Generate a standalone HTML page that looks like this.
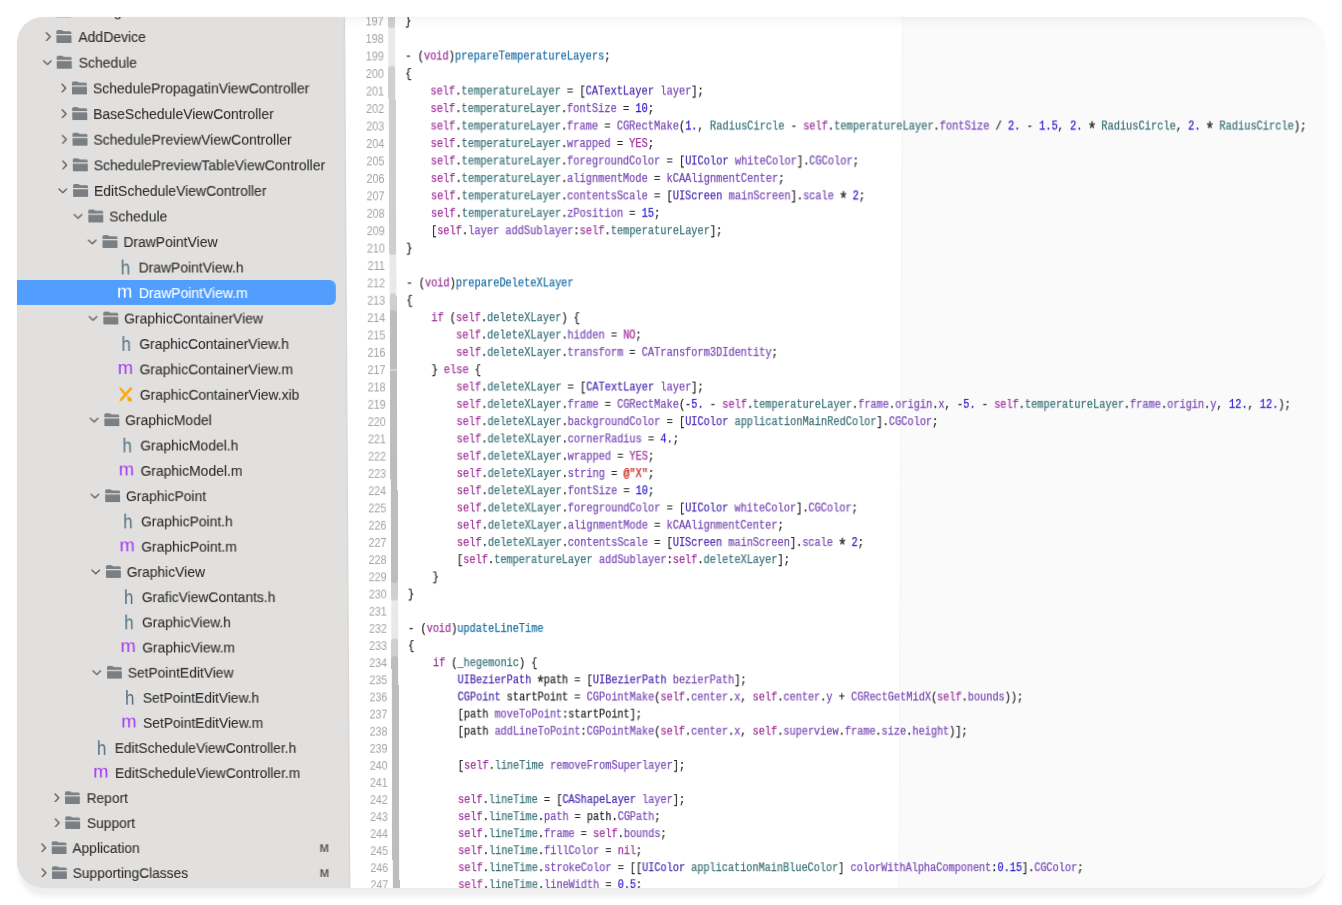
<!DOCTYPE html>
<html><head><meta charset="utf-8"><title>Xcode</title>
<style>
*{box-sizing:border-box}
html,body{margin:0;padding:0;background:#fff}
body{width:1342px;height:905px;overflow:hidden;position:relative;font-family:"Liberation Sans",sans-serif}
.card{position:absolute;left:17.2px;top:16.9px;width:1308.2px;height:870.8px;border-radius:26px;overflow:hidden;background:#fff;z-index:2}
.shadow{position:absolute;left:17.2px;top:16.9px;width:1308.4px;height:870.8px;border-radius:26px;box-shadow:0 9.5px 5.5px -2px rgba(0,0,0,.066),0 0 2px rgba(0,0,0,.03);z-index:1}
.warp{position:absolute;left:-17.2px;top:-16.9px;width:1400px;height:960px;transform-origin:0 0;transform:matrix3d(1,0,0,0, 0.01224000,1,0,0.00001800, 0,0,1,0, 0,0,0,1)}
.sb{position:absolute;left:0;top:0;width:345.35px;height:960px;background:#e1e0df}
.sbedge{position:absolute;left:343.15000000000003px;top:0;width:2.2px;height:960px;background:linear-gradient(90deg,rgba(0,0,0,0),rgba(0,0,0,.05))}
.ed{position:absolute;left:345.35px;top:0;width:1060px;height:960px;background:#fff}
.pg{position:absolute;left:556.75px;top:0;width:700px;height:960px;background:#fafafa;border-left:1px solid #f4f4f4}
.topsh{position:absolute;left:345.35px;top:0;width:1060px;height:29px;background:linear-gradient(180deg,rgba(0,0,0,.07) 0,rgba(0,0,0,.045) 17px,rgba(0,0,0,.012) 23px,rgba(0,0,0,0) 28px)}
.row{position:absolute;left:0;width:345.35px;height:25.758px;will-change:transform}
.row span{position:absolute;top:0;height:26px;line-height:26px;white-space:nowrap}
.selbg{position:absolute;left:0;width:333.8px;height:25.657999999999998px;background:#519efe;border-radius:0 6px 6px 0}
.nm{font-size:15.5px;color:#2e2d2c;transform-origin:0 50%;transform:scaleX(0.902);-webkit-text-stroke:0.1px}
.sel .nm{color:#fff}
.bd{left:314.1px;font-size:11.4px;font-weight:bold;color:#5b5a59}
.chw{width:12px}
.ch{position:absolute;left:0;top:6.88px;width:12px;height:12px}
svg.ch[viewBox="0 0 10 12"]{width:7.8px;height:9.4px;left:3.2px;top:7.78px}
svg.ch[viewBox="0 0 12 10"]{width:9.4px;height:7.8px;left:1.4px;top:9.48px}
.fow{width:16px}
.fo{position:absolute;left:0;top:5.78px;width:15.1px;height:13.4px;fill:#7a7f83}
.ih{font-size:20px;color:#4f7185;transform-origin:0 50%;transform:scaleX(.85)}
.im{font-size:18.5px;color:#a335f3;will-change:transform;transform:translateY(-1.4px)}
.sel .im{color:#fff}
.ix{width:14px}
.xi{position:absolute;left:0;top:5.13px;width:13.5px;height:15.4px}
.lw{position:absolute;left:0;width:1342px;height:18px;will-change:transform}
.ln{position:absolute;top:0;left:345.35px;width:38.55px;height:18px;line-height:18px;text-align:right;font-size:13.0px;color:#a3a3a3;white-space:nowrap}
.ln{transform-origin:100% 50%;transform:scaleX(.83)}
.gbar{position:absolute;left:388.0px;top:0;width:6.7px;height:960px;background:#e9e9e9}
.seg{position:absolute;left:388.0px;width:6.7px}
.cl{position:absolute;top:0;left:405.0px;height:18px;line-height:18px;font-family:"Liberation Mono",monospace;font-size:12.3px;color:#262626;white-space:pre;-webkit-text-stroke:0.25px;transform-origin:0 50%;transform:scaleX(0.84336)}
.cl i{font-style:normal}
.cl .a{display:inline-block;transform:translateY(3.6px) scale(1.45)}
.k{color:#a0329b}.d{color:#1a6fa6}.p{color:#3b7379}.s{color:#7a4bb6}.c{color:#4b2bb0}.n{color:#2a1bd0}.t{color:#c8251d}
</style></head>
<body>
<div class="shadow"></div>
<div class="card"><div class="warp">
<div class="sb"></div>
<div class="ed"><div class="pg"></div></div>
<div class="gbar"></div>
<div class="seg" style="top:-110.49px;height:138.09px;background:#cfcfcf;border-radius:0px 0px 3.35px 3.35px"></div>
<div class="seg" style="top:66.32px;height:189.57px;background:#cfcfcf;border-radius:3.35px 3.35px 3.35px 3.35px"></div>
<div class="seg" style="top:294.61px;height:21.36px;background:#cfcfcf;border-radius:3.35px 3.35px 0px 0px"></div>
<div class="seg" style="top:584.95px;height:22.16px;background:#cfcfcf;border-radius:0px 0px 3.35px 3.35px"></div>
<div class="seg" style="top:645.83px;height:21.36px;background:#cfcfcf;border-radius:3.35px 3.35px 0px 0px"></div>
<div class="seg" style="top:311.58px;height:60.26px;background:#bdbdbd;border-radius:3.35px 3.35px 0px 0px"></div>
<div class="seg" style="top:373.04px;height:215.91px;background:#bdbdbd;border-radius:0px 0px 3.35px 3.35px"></div>
<div class="seg" style="top:663.60px;height:314.70px;background:#bdbdbd;border-radius:3.35px 3.35px 0px 0px"></div>
<div class="lw" style="top:-6px;transform:translateY(0.878px)"><div class="ln">196</div></div>
<div class="lw" style="top:12px;transform:translateY(0.439px)"><div class="ln">197</div></div>
<div class="lw" style="top:29px;transform:translateY(1.000px)"><div class="ln">198</div></div>
<div class="lw" style="top:47px;transform:translateY(0.561px)"><div class="ln">199</div></div>
<div class="lw" style="top:65px;transform:translateY(0.121px)"><div class="ln">200</div></div>
<div class="lw" style="top:82px;transform:translateY(0.682px)"><div class="ln">201</div></div>
<div class="lw" style="top:100px;transform:translateY(0.243px)"><div class="ln">202</div></div>
<div class="lw" style="top:117px;transform:translateY(0.805px)"><div class="ln">203</div></div>
<div class="lw" style="top:135px;transform:translateY(0.366px)"><div class="ln">204</div></div>
<div class="lw" style="top:152px;transform:translateY(0.927px)"><div class="ln">205</div></div>
<div class="lw" style="top:170px;transform:translateY(0.488px)"><div class="ln">206</div></div>
<div class="lw" style="top:188px;transform:translateY(0.049px)"><div class="ln">207</div></div>
<div class="lw" style="top:205px;transform:translateY(0.610px)"><div class="ln">208</div></div>
<div class="lw" style="top:223px;transform:translateY(0.171px)"><div class="ln">209</div></div>
<div class="lw" style="top:240px;transform:translateY(0.732px)"><div class="ln">210</div></div>
<div class="lw" style="top:258px;transform:translateY(0.292px)"><div class="ln">211</div></div>
<div class="lw" style="top:275px;transform:translateY(0.853px)"><div class="ln">212</div></div>
<div class="lw" style="top:293px;transform:translateY(0.415px)"><div class="ln">213</div></div>
<div class="lw" style="top:310px;transform:translateY(0.975px)"><div class="ln">214</div></div>
<div class="lw" style="top:328px;transform:translateY(0.536px)"><div class="ln">215</div></div>
<div class="lw" style="top:346px;transform:translateY(0.098px)"><div class="ln">216</div></div>
<div class="lw" style="top:363px;transform:translateY(0.658px)"><div class="ln">217</div></div>
<div class="lw" style="top:381px;transform:translateY(0.219px)"><div class="ln">218</div></div>
<div class="lw" style="top:398px;transform:translateY(0.781px)"><div class="ln">219</div></div>
<div class="lw" style="top:416px;transform:translateY(0.341px)"><div class="ln">220</div></div>
<div class="lw" style="top:433px;transform:translateY(0.902px)"><div class="ln">221</div></div>
<div class="lw" style="top:451px;transform:translateY(0.464px)"><div class="ln">222</div></div>
<div class="lw" style="top:469px;transform:translateY(0.024px)"><div class="ln">223</div></div>
<div class="lw" style="top:486px;transform:translateY(0.585px)"><div class="ln">224</div></div>
<div class="lw" style="top:504px;transform:translateY(0.147px)"><div class="ln">225</div></div>
<div class="lw" style="top:521px;transform:translateY(0.707px)"><div class="ln">226</div></div>
<div class="lw" style="top:539px;transform:translateY(0.269px)"><div class="ln">227</div></div>
<div class="lw" style="top:556px;transform:translateY(0.830px)"><div class="ln">228</div></div>
<div class="lw" style="top:574px;transform:translateY(0.390px)"><div class="ln">229</div></div>
<div class="lw" style="top:591px;transform:translateY(0.952px)"><div class="ln">230</div></div>
<div class="lw" style="top:609px;transform:translateY(0.513px)"><div class="ln">231</div></div>
<div class="lw" style="top:627px;transform:translateY(0.073px)"><div class="ln">232</div></div>
<div class="lw" style="top:644px;transform:translateY(0.635px)"><div class="ln">233</div></div>
<div class="lw" style="top:662px;transform:translateY(0.196px)"><div class="ln">234</div></div>
<div class="lw" style="top:679px;transform:translateY(0.756px)"><div class="ln">235</div></div>
<div class="lw" style="top:697px;transform:translateY(0.317px)"><div class="ln">236</div></div>
<div class="lw" style="top:714px;transform:translateY(0.879px)"><div class="ln">237</div></div>
<div class="lw" style="top:732px;transform:translateY(0.440px)"><div class="ln">238</div></div>
<div class="lw" style="top:750px;transform:translateY(0.000px)"><div class="ln">239</div></div>
<div class="lw" style="top:767px;transform:translateY(0.562px)"><div class="ln">240</div></div>
<div class="lw" style="top:785px;transform:translateY(0.123px)"><div class="ln">241</div></div>
<div class="lw" style="top:802px;transform:translateY(0.683px)"><div class="ln">242</div></div>
<div class="lw" style="top:820px;transform:translateY(0.245px)"><div class="ln">243</div></div>
<div class="lw" style="top:837px;transform:translateY(0.806px)"><div class="ln">244</div></div>
<div class="lw" style="top:855px;transform:translateY(0.366px)"><div class="ln">245</div></div>
<div class="lw" style="top:872px;transform:translateY(0.928px)"><div class="ln">246</div></div>
<div class="lw" style="top:890px;transform:translateY(0.489px)"><div class="ln">247</div></div>
<div class="lw" style="top:908px;transform:translateY(0.049px)"><div class="ln">248</div></div>
<div class="lw" style="top:12px;transform:translateY(0.439px)"><div class="cl">}</div></div>
<div class="lw" style="top:47px;transform:translateY(0.561px)"><div class="cl">- (<i class="k">void</i>)<i class="d">prepareTemperatureLayers</i>;</div></div>
<div class="lw" style="top:65px;transform:translateY(0.121px)"><div class="cl">{</div></div>
<div class="lw" style="top:82px;transform:translateY(0.682px)"><div class="cl">    <i class="k">self</i>.<i class="p">temperatureLayer</i> = [<i class="c">CATextLayer</i> <i class="s">layer</i>];</div></div>
<div class="lw" style="top:100px;transform:translateY(0.243px)"><div class="cl">    <i class="k">self</i>.<i class="p">temperatureLayer</i>.<i class="s">fontSize</i> = <i class="n">10</i>;</div></div>
<div class="lw" style="top:117px;transform:translateY(0.805px)"><div class="cl">    <i class="k">self</i>.<i class="p">temperatureLayer</i>.<i class="s">frame</i> = <i class="s">CGRectMake</i>(<i class="n">1.</i>, <i class="p">RadiusCircle</i> - <i class="k">self</i>.<i class="p">temperatureLayer</i>.<i class="s">fontSize</i> / <i class="n">2.</i> - <i class="n">1.5</i>, <i class="n">2.</i> <i class="a">*</i> <i class="p">RadiusCircle</i>, <i class="n">2.</i> <i class="a">*</i> <i class="p">RadiusCircle</i>);</div></div>
<div class="lw" style="top:135px;transform:translateY(0.366px)"><div class="cl">    <i class="k">self</i>.<i class="p">temperatureLayer</i>.<i class="s">wrapped</i> = <i class="k">YES</i>;</div></div>
<div class="lw" style="top:152px;transform:translateY(0.927px)"><div class="cl">    <i class="k">self</i>.<i class="p">temperatureLayer</i>.<i class="s">foregroundColor</i> = [<i class="c">UIColor</i> <i class="s">whiteColor</i>].<i class="s">CGColor</i>;</div></div>
<div class="lw" style="top:170px;transform:translateY(0.488px)"><div class="cl">    <i class="k">self</i>.<i class="p">temperatureLayer</i>.<i class="s">alignmentMode</i> = <i class="s">kCAAlignmentCenter</i>;</div></div>
<div class="lw" style="top:188px;transform:translateY(0.049px)"><div class="cl">    <i class="k">self</i>.<i class="p">temperatureLayer</i>.<i class="s">contentsScale</i> = [<i class="c">UIScreen</i> <i class="s">mainScreen</i>].<i class="s">scale</i> <i class="a">*</i> <i class="n">2</i>;</div></div>
<div class="lw" style="top:205px;transform:translateY(0.610px)"><div class="cl">    <i class="k">self</i>.<i class="p">temperatureLayer</i>.<i class="s">zPosition</i> = <i class="n">15</i>;</div></div>
<div class="lw" style="top:223px;transform:translateY(0.171px)"><div class="cl">    [<i class="k">self</i>.<i class="s">layer</i> <i class="s">addSublayer</i>:<i class="k">self</i>.<i class="p">temperatureLayer</i>];</div></div>
<div class="lw" style="top:240px;transform:translateY(0.732px)"><div class="cl">}</div></div>
<div class="lw" style="top:275px;transform:translateY(0.853px)"><div class="cl">- (<i class="k">void</i>)<i class="d">prepareDeleteXLayer</i></div></div>
<div class="lw" style="top:293px;transform:translateY(0.415px)"><div class="cl">{</div></div>
<div class="lw" style="top:310px;transform:translateY(0.975px)"><div class="cl">    <i class="k">if</i> (<i class="k">self</i>.<i class="p">deleteXLayer</i>) {</div></div>
<div class="lw" style="top:328px;transform:translateY(0.536px)"><div class="cl">        <i class="k">self</i>.<i class="p">deleteXLayer</i>.<i class="s">hidden</i> = <i class="k">NO</i>;</div></div>
<div class="lw" style="top:346px;transform:translateY(0.098px)"><div class="cl">        <i class="k">self</i>.<i class="p">deleteXLayer</i>.<i class="s">transform</i> = <i class="s">CATransform3DIdentity</i>;</div></div>
<div class="lw" style="top:363px;transform:translateY(0.658px)"><div class="cl">    } <i class="k">else</i> {</div></div>
<div class="lw" style="top:381px;transform:translateY(0.219px)"><div class="cl">        <i class="k">self</i>.<i class="p">deleteXLayer</i> = [<i class="c">CATextLayer</i> <i class="s">layer</i>];</div></div>
<div class="lw" style="top:398px;transform:translateY(0.781px)"><div class="cl">        <i class="k">self</i>.<i class="p">deleteXLayer</i>.<i class="s">frame</i> = <i class="s">CGRectMake</i>(-<i class="n">5.</i> - <i class="k">self</i>.<i class="p">temperatureLayer</i>.<i class="s">frame</i>.<i class="s">origin</i>.<i class="s">x</i>, -<i class="n">5.</i> - <i class="k">self</i>.<i class="p">temperatureLayer</i>.<i class="s">frame</i>.<i class="s">origin</i>.<i class="s">y</i>, <i class="n">12.</i>, <i class="n">12.</i>);</div></div>
<div class="lw" style="top:416px;transform:translateY(0.341px)"><div class="cl">        <i class="k">self</i>.<i class="p">deleteXLayer</i>.<i class="s">backgroundColor</i> = [<i class="c">UIColor</i> <i class="p">applicationMainRedColor</i>].<i class="s">CGColor</i>;</div></div>
<div class="lw" style="top:433px;transform:translateY(0.902px)"><div class="cl">        <i class="k">self</i>.<i class="p">deleteXLayer</i>.<i class="s">cornerRadius</i> = <i class="n">4.</i>;</div></div>
<div class="lw" style="top:451px;transform:translateY(0.464px)"><div class="cl">        <i class="k">self</i>.<i class="p">deleteXLayer</i>.<i class="s">wrapped</i> = <i class="k">YES</i>;</div></div>
<div class="lw" style="top:469px;transform:translateY(0.024px)"><div class="cl">        <i class="k">self</i>.<i class="p">deleteXLayer</i>.<i class="s">string</i> = <i class="t">@&quot;X&quot;</i>;</div></div>
<div class="lw" style="top:486px;transform:translateY(0.585px)"><div class="cl">        <i class="k">self</i>.<i class="p">deleteXLayer</i>.<i class="s">fontSize</i> = <i class="n">10</i>;</div></div>
<div class="lw" style="top:504px;transform:translateY(0.147px)"><div class="cl">        <i class="k">self</i>.<i class="p">deleteXLayer</i>.<i class="s">foregroundColor</i> = [<i class="c">UIColor</i> <i class="s">whiteColor</i>].<i class="s">CGColor</i>;</div></div>
<div class="lw" style="top:521px;transform:translateY(0.707px)"><div class="cl">        <i class="k">self</i>.<i class="p">deleteXLayer</i>.<i class="s">alignmentMode</i> = <i class="s">kCAAlignmentCenter</i>;</div></div>
<div class="lw" style="top:539px;transform:translateY(0.269px)"><div class="cl">        <i class="k">self</i>.<i class="p">deleteXLayer</i>.<i class="s">contentsScale</i> = [<i class="c">UIScreen</i> <i class="s">mainScreen</i>].<i class="s">scale</i> <i class="a">*</i> <i class="n">2</i>;</div></div>
<div class="lw" style="top:556px;transform:translateY(0.830px)"><div class="cl">        [<i class="k">self</i>.<i class="p">temperatureLayer</i> <i class="s">addSublayer</i>:<i class="k">self</i>.<i class="p">deleteXLayer</i>];</div></div>
<div class="lw" style="top:574px;transform:translateY(0.390px)"><div class="cl">    }</div></div>
<div class="lw" style="top:591px;transform:translateY(0.952px)"><div class="cl">}</div></div>
<div class="lw" style="top:627px;transform:translateY(0.073px)"><div class="cl">- (<i class="k">void</i>)<i class="d">updateLineTime</i></div></div>
<div class="lw" style="top:644px;transform:translateY(0.635px)"><div class="cl">{</div></div>
<div class="lw" style="top:662px;transform:translateY(0.196px)"><div class="cl">    <i class="k">if</i> (<i class="p">_hegemonic</i>) {</div></div>
<div class="lw" style="top:679px;transform:translateY(0.756px)"><div class="cl">        <i class="c">UIBezierPath</i> <i class="a">*</i>path = [<i class="c">UIBezierPath</i> <i class="s">bezierPath</i>];</div></div>
<div class="lw" style="top:697px;transform:translateY(0.317px)"><div class="cl">        <i class="c">CGPoint</i> startPoint = <i class="s">CGPointMake</i>(<i class="k">self</i>.<i class="s">center</i>.<i class="s">x</i>, <i class="k">self</i>.<i class="s">center</i>.<i class="s">y</i> + <i class="s">CGRectGetMidX</i>(<i class="k">self</i>.<i class="s">bounds</i>));</div></div>
<div class="lw" style="top:714px;transform:translateY(0.879px)"><div class="cl">        [path <i class="s">moveToPoint</i>:startPoint];</div></div>
<div class="lw" style="top:732px;transform:translateY(0.440px)"><div class="cl">        [path <i class="s">addLineToPoint</i>:<i class="s">CGPointMake</i>(<i class="k">self</i>.<i class="s">center</i>.<i class="s">x</i>, <i class="k">self</i>.<i class="s">superview</i>.<i class="s">frame</i>.<i class="s">size</i>.<i class="s">height</i>)];</div></div>
<div class="lw" style="top:767px;transform:translateY(0.562px)"><div class="cl">        [<i class="k">self</i>.<i class="p">lineTime</i> <i class="s">removeFromSuperlayer</i>];</div></div>
<div class="lw" style="top:802px;transform:translateY(0.683px)"><div class="cl">        <i class="k">self</i>.<i class="p">lineTime</i> = [<i class="c">CAShapeLayer</i> <i class="s">layer</i>];</div></div>
<div class="lw" style="top:820px;transform:translateY(0.245px)"><div class="cl">        <i class="k">self</i>.<i class="p">lineTime</i>.<i class="s">path</i> = path.<i class="s">CGPath</i>;</div></div>
<div class="lw" style="top:837px;transform:translateY(0.806px)"><div class="cl">        <i class="k">self</i>.<i class="p">lineTime</i>.<i class="s">frame</i> = <i class="k">self</i>.<i class="s">bounds</i>;</div></div>
<div class="lw" style="top:855px;transform:translateY(0.366px)"><div class="cl">        <i class="k">self</i>.<i class="p">lineTime</i>.<i class="s">fillColor</i> = <i class="k">nil</i>;</div></div>
<div class="lw" style="top:872px;transform:translateY(0.928px)"><div class="cl">        <i class="k">self</i>.<i class="p">lineTime</i>.<i class="s">strokeColor</i> = [[<i class="c">UIColor</i> <i class="p">applicationMainBlueColor</i>] <i class="s">colorWithAlphaComponent</i>:<i class="n">0.15</i>].<i class="s">CGColor</i>;</div></div>
<div class="lw" style="top:890px;transform:translateY(0.489px)"><div class="cl">        <i class="k">self</i>.<i class="p">lineTime</i>.<i class="s">lineWidth</i> = <i class="n">0.5</i>;</div></div>
<div class="lw" style="top:908px;transform:translateY(0.049px)"><div class="cl">        <i class="k">self</i>.<i class="p">lineTime</i>.<i class="s">opacity</i> = <i class="n">1</i>;</div></div>
<div class="topsh"></div>
<div class="sbedge"></div>
<div class="row" style="top:-2px;transform:translateY(0.283px)"><span class="chw" style="left:41.05px;top:-0.00px"><svg class="ch" viewBox="0 0 10 12"><path d="M2.6 1.0 L7.4 6 L2.6 11.0" fill="none" stroke="#5a5856" stroke-width="1.7" stroke-linecap="round" stroke-linejoin="round"/></svg></span><span class="fow" style="left:56.45px;top:-0.00px"><svg class="fo" viewBox="0 0 152 134"><path d="M0 16Q0 0 16 0H48Q58 0 64 6L66 8Q70 12 80 12H136Q152 12 152 28V40H0Z"/><path d="M0 53H152V120Q152 134 138 134H14Q0 134 0 120Z"/></svg></span><span class="nm" style="left:77.75px">Settings</span></div>
<div class="row" style="top:24px;transform:translateY(0.041px)"><span class="chw" style="left:41.05px;top:-0.00px"><svg class="ch" viewBox="0 0 10 12"><path d="M2.6 1.0 L7.4 6 L2.6 11.0" fill="none" stroke="#5a5856" stroke-width="1.7" stroke-linecap="round" stroke-linejoin="round"/></svg></span><span class="fow" style="left:56.45px;top:-0.00px"><svg class="fo" viewBox="0 0 152 134"><path d="M0 16Q0 0 16 0H48Q58 0 64 6L66 8Q70 12 80 12H136Q152 12 152 28V40H0Z"/><path d="M0 53H152V120Q152 134 138 134H14Q0 134 0 120Z"/></svg></span><span class="nm" style="left:77.75px">AddDevice</span></div>
<div class="row" style="top:49px;transform:translateY(0.799px)"><span class="chw" style="left:40.45px;top:-0.00px"><svg class="ch" viewBox="0 0 12 10"><path d="M1.0 2.6 L6 7.4 L11.0 2.6" fill="none" stroke="#5a5856" stroke-width="1.5" stroke-linecap="round" stroke-linejoin="round"/></svg></span><span class="fow" style="left:56.45px;top:-0.00px"><svg class="fo" viewBox="0 0 152 134"><path d="M0 16Q0 0 16 0H48Q58 0 64 6L66 8Q70 12 80 12H136Q152 12 152 28V40H0Z"/><path d="M0 53H152V120Q152 134 138 134H14Q0 134 0 120Z"/></svg></span><span class="nm" style="left:77.75px">Schedule</span></div>
<div class="row" style="top:75px;transform:translateY(0.557px)"><span class="chw" style="left:55.60px;top:-0.00px"><svg class="ch" viewBox="0 0 10 12"><path d="M2.6 1.0 L7.4 6 L2.6 11.0" fill="none" stroke="#5a5856" stroke-width="1.7" stroke-linecap="round" stroke-linejoin="round"/></svg></span><span class="fow" style="left:71.00px;top:-0.00px"><svg class="fo" viewBox="0 0 152 134"><path d="M0 16Q0 0 16 0H48Q58 0 64 6L66 8Q70 12 80 12H136Q152 12 152 28V40H0Z"/><path d="M0 53H152V120Q152 134 138 134H14Q0 134 0 120Z"/></svg></span><span class="nm" style="left:92.30px">SchedulePropagatinViewController</span></div>
<div class="row" style="top:101px;transform:translateY(0.315px)"><span class="chw" style="left:55.60px;top:-0.00px"><svg class="ch" viewBox="0 0 10 12"><path d="M2.6 1.0 L7.4 6 L2.6 11.0" fill="none" stroke="#5a5856" stroke-width="1.7" stroke-linecap="round" stroke-linejoin="round"/></svg></span><span class="fow" style="left:71.00px;top:-0.00px"><svg class="fo" viewBox="0 0 152 134"><path d="M0 16Q0 0 16 0H48Q58 0 64 6L66 8Q70 12 80 12H136Q152 12 152 28V40H0Z"/><path d="M0 53H152V120Q152 134 138 134H14Q0 134 0 120Z"/></svg></span><span class="nm" style="left:92.30px">BaseScheduleViewController</span></div>
<div class="row" style="top:127px;transform:translateY(0.073px)"><span class="chw" style="left:55.60px;top:-0.00px"><svg class="ch" viewBox="0 0 10 12"><path d="M2.6 1.0 L7.4 6 L2.6 11.0" fill="none" stroke="#5a5856" stroke-width="1.7" stroke-linecap="round" stroke-linejoin="round"/></svg></span><span class="fow" style="left:71.00px;top:-0.00px"><svg class="fo" viewBox="0 0 152 134"><path d="M0 16Q0 0 16 0H48Q58 0 64 6L66 8Q70 12 80 12H136Q152 12 152 28V40H0Z"/><path d="M0 53H152V120Q152 134 138 134H14Q0 134 0 120Z"/></svg></span><span class="nm" style="left:92.30px">SchedulePreviewViewController</span></div>
<div class="row" style="top:152px;transform:translateY(0.831px)"><span class="chw" style="left:55.60px;top:-0.00px"><svg class="ch" viewBox="0 0 10 12"><path d="M2.6 1.0 L7.4 6 L2.6 11.0" fill="none" stroke="#5a5856" stroke-width="1.7" stroke-linecap="round" stroke-linejoin="round"/></svg></span><span class="fow" style="left:71.00px;top:-0.00px"><svg class="fo" viewBox="0 0 152 134"><path d="M0 16Q0 0 16 0H48Q58 0 64 6L66 8Q70 12 80 12H136Q152 12 152 28V40H0Z"/><path d="M0 53H152V120Q152 134 138 134H14Q0 134 0 120Z"/></svg></span><span class="nm" style="left:92.30px">SchedulePreviewTableViewController</span></div>
<div class="row" style="top:178px;transform:translateY(0.589px)"><span class="chw" style="left:55.00px;top:-0.00px"><svg class="ch" viewBox="0 0 12 10"><path d="M1.0 2.6 L6 7.4 L11.0 2.6" fill="none" stroke="#5a5856" stroke-width="1.5" stroke-linecap="round" stroke-linejoin="round"/></svg></span><span class="fow" style="left:71.00px;top:-0.00px"><svg class="fo" viewBox="0 0 152 134"><path d="M0 16Q0 0 16 0H48Q58 0 64 6L66 8Q70 12 80 12H136Q152 12 152 28V40H0Z"/><path d="M0 53H152V120Q152 134 138 134H14Q0 134 0 120Z"/></svg></span><span class="nm" style="left:92.30px">EditScheduleViewController</span></div>
<div class="row" style="top:204px;transform:translateY(0.347px)"><span class="chw" style="left:69.55px;top:-0.00px"><svg class="ch" viewBox="0 0 12 10"><path d="M1.0 2.6 L6 7.4 L11.0 2.6" fill="none" stroke="#5a5856" stroke-width="1.5" stroke-linecap="round" stroke-linejoin="round"/></svg></span><span class="fow" style="left:85.55px;top:-0.00px"><svg class="fo" viewBox="0 0 152 134"><path d="M0 16Q0 0 16 0H48Q58 0 64 6L66 8Q70 12 80 12H136Q152 12 152 28V40H0Z"/><path d="M0 53H152V120Q152 134 138 134H14Q0 134 0 120Z"/></svg></span><span class="nm" style="left:106.85px">Schedule</span></div>
<div class="row" style="top:230px;transform:translateY(0.105px)"><span class="chw" style="left:84.10px;top:-0.00px"><svg class="ch" viewBox="0 0 12 10"><path d="M1.0 2.6 L6 7.4 L11.0 2.6" fill="none" stroke="#5a5856" stroke-width="1.5" stroke-linecap="round" stroke-linejoin="round"/></svg></span><span class="fow" style="left:100.10px;top:-0.00px"><svg class="fo" viewBox="0 0 152 134"><path d="M0 16Q0 0 16 0H48Q58 0 64 6L66 8Q70 12 80 12H136Q152 12 152 28V40H0Z"/><path d="M0 53H152V120Q152 134 138 134H14Q0 134 0 120Z"/></svg></span><span class="nm" style="left:121.40px">DrawPointView</span></div>
<div class="row" style="top:255px;transform:translateY(0.863px)"><span class="ih" style="left:117.70px">h</span><span class="nm" style="left:135.95px">DrawPointView.h</span></div>
<div class="row sel" style="top:281px;transform:translateY(0.621px)"><div class="selbg" style="top:-0.50px"></div><span class="im" style="left:114.35px">m</span><span class="nm" style="left:135.95px">DrawPointView.m</span></div>
<div class="row" style="top:307px;transform:translateY(0.379px)"><span class="chw" style="left:84.10px;top:-0.00px"><svg class="ch" viewBox="0 0 12 10"><path d="M1.0 2.6 L6 7.4 L11.0 2.6" fill="none" stroke="#5a5856" stroke-width="1.5" stroke-linecap="round" stroke-linejoin="round"/></svg></span><span class="fow" style="left:100.10px;top:-0.00px"><svg class="fo" viewBox="0 0 152 134"><path d="M0 16Q0 0 16 0H48Q58 0 64 6L66 8Q70 12 80 12H136Q152 12 152 28V40H0Z"/><path d="M0 53H152V120Q152 134 138 134H14Q0 134 0 120Z"/></svg></span><span class="nm" style="left:121.40px">GraphicContainerView</span></div>
<div class="row" style="top:333px;transform:translateY(0.137px)"><span class="ih" style="left:117.70px">h</span><span class="nm" style="left:135.95px">GraphicContainerView.h</span></div>
<div class="row" style="top:358px;transform:translateY(0.895px)"><span class="im" style="left:114.35px">m</span><span class="nm" style="left:135.95px">GraphicContainerView.m</span></div>
<div class="row" style="top:384px;transform:translateY(0.653px)"><span class="ix" style="left:115.45px;top:-0.00px"><svg class="xi" viewBox="0 0 13.5 15.4"><g fill="#fcaa0c"><path d="M12.4 .35a1.2 1.2 0 0 1 .65 2.1L3.25 13.85.4 15.1 1.15 12.05 10.8.75a1.2 1.2 0 0 1 1.6-.4z"/><path d="M.1 1.5 1.4.2 6.7 5.6 4.7 7.8z"/><path d="M6.6 8.3l.95-.85 1.8 2.45-1.05.9z" opacity=".55"/><path d="M8.4 10.4Q9.5 9.2 11 10q2 1.5 2.4 3.6-1 1.7-3.1 1.4-2.3-1.2-1.9-4.6z"/></g></svg></span><span class="nm" style="left:135.95px">GraphicContainerView.xib</span></div>
<div class="row" style="top:410px;transform:translateY(0.411px)"><span class="chw" style="left:84.10px;top:-0.00px"><svg class="ch" viewBox="0 0 12 10"><path d="M1.0 2.6 L6 7.4 L11.0 2.6" fill="none" stroke="#5a5856" stroke-width="1.5" stroke-linecap="round" stroke-linejoin="round"/></svg></span><span class="fow" style="left:100.10px;top:-0.00px"><svg class="fo" viewBox="0 0 152 134"><path d="M0 16Q0 0 16 0H48Q58 0 64 6L66 8Q70 12 80 12H136Q152 12 152 28V40H0Z"/><path d="M0 53H152V120Q152 134 138 134H14Q0 134 0 120Z"/></svg></span><span class="nm" style="left:121.40px">GraphicModel</span></div>
<div class="row" style="top:436px;transform:translateY(0.169px)"><span class="ih" style="left:117.70px">h</span><span class="nm" style="left:135.95px">GraphicModel.h</span></div>
<div class="row" style="top:461px;transform:translateY(0.927px)"><span class="im" style="left:114.35px">m</span><span class="nm" style="left:135.95px">GraphicModel.m</span></div>
<div class="row" style="top:487px;transform:translateY(0.685px)"><span class="chw" style="left:84.10px;top:-0.00px"><svg class="ch" viewBox="0 0 12 10"><path d="M1.0 2.6 L6 7.4 L11.0 2.6" fill="none" stroke="#5a5856" stroke-width="1.5" stroke-linecap="round" stroke-linejoin="round"/></svg></span><span class="fow" style="left:100.10px;top:-0.00px"><svg class="fo" viewBox="0 0 152 134"><path d="M0 16Q0 0 16 0H48Q58 0 64 6L66 8Q70 12 80 12H136Q152 12 152 28V40H0Z"/><path d="M0 53H152V120Q152 134 138 134H14Q0 134 0 120Z"/></svg></span><span class="nm" style="left:121.40px">GraphicPoint</span></div>
<div class="row" style="top:513px;transform:translateY(0.443px)"><span class="ih" style="left:117.70px">h</span><span class="nm" style="left:135.95px">GraphicPoint.h</span></div>
<div class="row" style="top:539px;transform:translateY(0.201px)"><span class="im" style="left:114.35px">m</span><span class="nm" style="left:135.95px">GraphicPoint.m</span></div>
<div class="row" style="top:564px;transform:translateY(0.959px)"><span class="chw" style="left:84.10px;top:-0.00px"><svg class="ch" viewBox="0 0 12 10"><path d="M1.0 2.6 L6 7.4 L11.0 2.6" fill="none" stroke="#5a5856" stroke-width="1.5" stroke-linecap="round" stroke-linejoin="round"/></svg></span><span class="fow" style="left:100.10px;top:-0.00px"><svg class="fo" viewBox="0 0 152 134"><path d="M0 16Q0 0 16 0H48Q58 0 64 6L66 8Q70 12 80 12H136Q152 12 152 28V40H0Z"/><path d="M0 53H152V120Q152 134 138 134H14Q0 134 0 120Z"/></svg></span><span class="nm" style="left:121.40px">GraphicView</span></div>
<div class="row" style="top:590px;transform:translateY(0.717px)"><span class="ih" style="left:117.70px">h</span><span class="nm" style="left:135.95px">GraficViewContants.h</span></div>
<div class="row" style="top:616px;transform:translateY(0.475px)"><span class="ih" style="left:117.70px">h</span><span class="nm" style="left:135.95px">GraphicView.h</span></div>
<div class="row" style="top:642px;transform:translateY(0.233px)"><span class="im" style="left:114.35px">m</span><span class="nm" style="left:135.95px">GraphicView.m</span></div>
<div class="row" style="top:667px;transform:translateY(0.991px)"><span class="chw" style="left:84.10px;top:-0.00px"><svg class="ch" viewBox="0 0 12 10"><path d="M1.0 2.6 L6 7.4 L11.0 2.6" fill="none" stroke="#5a5856" stroke-width="1.5" stroke-linecap="round" stroke-linejoin="round"/></svg></span><span class="fow" style="left:100.10px;top:-0.00px"><svg class="fo" viewBox="0 0 152 134"><path d="M0 16Q0 0 16 0H48Q58 0 64 6L66 8Q70 12 80 12H136Q152 12 152 28V40H0Z"/><path d="M0 53H152V120Q152 134 138 134H14Q0 134 0 120Z"/></svg></span><span class="nm" style="left:121.40px">SetPointEditView</span></div>
<div class="row" style="top:693px;transform:translateY(0.749px)"><span class="ih" style="left:117.70px">h</span><span class="nm" style="left:135.95px">SetPointEditView.h</span></div>
<div class="row" style="top:719px;transform:translateY(0.507px)"><span class="im" style="left:114.35px">m</span><span class="nm" style="left:135.95px">SetPointEditView.m</span></div>
<div class="row" style="top:745px;transform:translateY(0.265px)"><span class="ih" style="left:88.60px">h</span><span class="nm" style="left:106.85px">EditScheduleViewController.h</span></div>
<div class="row" style="top:771px;transform:translateY(0.023px)"><span class="im" style="left:85.25px">m</span><span class="nm" style="left:106.85px">EditScheduleViewController.m</span></div>
<div class="row" style="top:796px;transform:translateY(0.781px)"><span class="chw" style="left:41.05px;top:-0.00px"><svg class="ch" viewBox="0 0 10 12"><path d="M2.6 1.0 L7.4 6 L2.6 11.0" fill="none" stroke="#5a5856" stroke-width="1.7" stroke-linecap="round" stroke-linejoin="round"/></svg></span><span class="fow" style="left:56.45px;top:-0.00px"><svg class="fo" viewBox="0 0 152 134"><path d="M0 16Q0 0 16 0H48Q58 0 64 6L66 8Q70 12 80 12H136Q152 12 152 28V40H0Z"/><path d="M0 53H152V120Q152 134 138 134H14Q0 134 0 120Z"/></svg></span><span class="nm" style="left:77.75px">Report</span></div>
<div class="row" style="top:822px;transform:translateY(0.539px)"><span class="chw" style="left:41.05px;top:-0.00px"><svg class="ch" viewBox="0 0 10 12"><path d="M2.6 1.0 L7.4 6 L2.6 11.0" fill="none" stroke="#5a5856" stroke-width="1.7" stroke-linecap="round" stroke-linejoin="round"/></svg></span><span class="fow" style="left:56.45px;top:-0.00px"><svg class="fo" viewBox="0 0 152 134"><path d="M0 16Q0 0 16 0H48Q58 0 64 6L66 8Q70 12 80 12H136Q152 12 152 28V40H0Z"/><path d="M0 53H152V120Q152 134 138 134H14Q0 134 0 120Z"/></svg></span><span class="nm" style="left:77.75px">Support</span></div>
<div class="row" style="top:848px;transform:translateY(0.297px)"><span class="chw" style="left:26.50px;top:-0.00px"><svg class="ch" viewBox="0 0 10 12"><path d="M2.6 1.0 L7.4 6 L2.6 11.0" fill="none" stroke="#5a5856" stroke-width="1.7" stroke-linecap="round" stroke-linejoin="round"/></svg></span><span class="fow" style="left:41.90px;top:-0.00px"><svg class="fo" viewBox="0 0 152 134"><path d="M0 16Q0 0 16 0H48Q58 0 64 6L66 8Q70 12 80 12H136Q152 12 152 28V40H0Z"/><path d="M0 53H152V120Q152 134 138 134H14Q0 134 0 120Z"/></svg></span><span class="nm" style="left:63.20px">Application</span><span class="bd">M</span></div>
<div class="row" style="top:874px;transform:translateY(0.055px)"><span class="chw" style="left:26.50px;top:-0.00px"><svg class="ch" viewBox="0 0 10 12"><path d="M2.6 1.0 L7.4 6 L2.6 11.0" fill="none" stroke="#5a5856" stroke-width="1.7" stroke-linecap="round" stroke-linejoin="round"/></svg></span><span class="fow" style="left:41.90px;top:-0.00px"><svg class="fo" viewBox="0 0 152 134"><path d="M0 16Q0 0 16 0H48Q58 0 64 6L66 8Q70 12 80 12H136Q152 12 152 28V40H0Z"/><path d="M0 53H152V120Q152 134 138 134H14Q0 134 0 120Z"/></svg></span><span class="nm" style="left:63.20px">SupportingClasses</span><span class="bd">M</span></div>
</div></div>
</body></html>
